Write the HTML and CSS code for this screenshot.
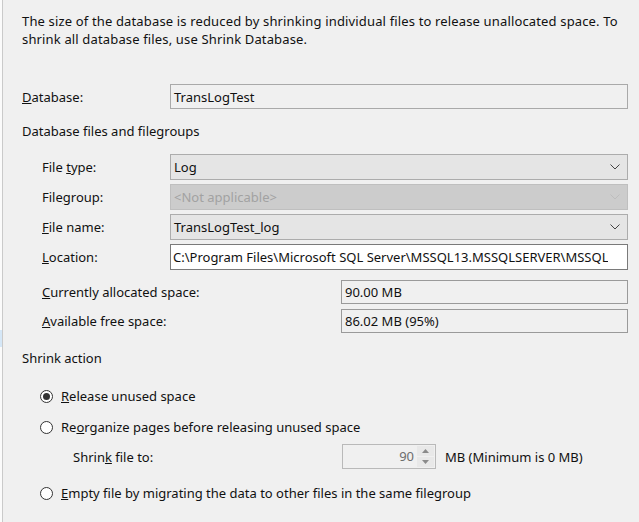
FILE: index.html
```html
<!DOCTYPE html>
<html>
<head>
<meta charset="utf-8">
<link rel="stylesheet" href="styles.css">
</head>
<body>
<div class="page">
  <div class="edge"><div class="edge-hl"></div></div>
  <div class="content">
    <p class="desc">The size of the database is reduced by shrinking individual files to release unallocated space. To<br>shrink all database files, use Shrink Database.</p>

    <div class="row db-row">
      <span class="label"><u>D</u>atabase:</span>
      <div class="field readonly">TransLogTest</div>
    </div>

    <div class="heading files-heading">Database files and filegroups</div>

    <div class="group">
      <div class="row sub-row">
        <span class="label">File <u>t</u>ype:</span>
        <div class="field combo"><span>Log</span><svg class="chev" width="10" height="6" viewBox="0 0 10 6"><path d="M0.5 0.5 L5 5 L9.5 0.5" fill="none" stroke="#444" stroke-width="1"/></svg></div>
      </div>
      <div class="row sub-row">
        <span class="label">File<u>g</u>roup:</span>
        <div class="field combo disabled"><span>&lt;Not applicable&gt;</span><svg class="chev" width="10" height="6" viewBox="0 0 10 6"><path d="M0.5 0.5 L5 5 L9.5 0.5" fill="none" stroke="#bdbdbd" stroke-width="1"/></svg></div>
      </div>
      <div class="row sub-row">
        <span class="label"><u>F</u>ile name:</span>
        <div class="field combo"><span>TransLogTest_log</span><svg class="chev" width="10" height="6" viewBox="0 0 10 6"><path d="M0.5 0.5 L5 5 L9.5 0.5" fill="none" stroke="#444" stroke-width="1"/></svg></div>
      </div>
      <div class="row sub-row">
        <span class="label"><u>L</u>ocation:</span>
        <div class="field text"><span class="clip">C:\Program Files\Microsoft SQL Server\MSSQL13.MSSQLSERVER\MSSQL</span></div>
      </div>
    </div>

    <div class="space-group">
      <div class="row space-row">
        <span class="label"><u>C</u>urrently allocated space:</span>
        <div class="field readonly small">90.00 MB</div>
      </div>
      <div class="row space-row">
        <span class="label"><u>A</u>vailable free space:</span>
        <div class="field readonly small">86.02 MB (95%)</div>
      </div>
    </div>

    <div class="heading shrink-heading">Shrink action</div>

    <div class="radio-row first">
      <span class="radio checked"></span>
      <span><u>R</u>elease unused space</span>
    </div>
    <div class="radio-row second">
      <span class="radio"></span>
      <span>Re<u>o</u>rganize pages before releasing unused space</span>
    </div>
    <div class="shrink-row">
      <span class="shrink-label">Shrin<u>k</u> file to:</span>
      <div class="spinner">
        <span class="spin-val">90</span>
        <div class="spin-btns">
          <span class="spin-btn"><svg width="7" height="4" viewBox="0 0 7 4"><path d="M0 4 L3.5 0 L7 4 Z" fill="#8a8a8a"/></svg></span>
          <span class="spin-btn"><svg width="7" height="4" viewBox="0 0 7 4"><path d="M0 0 L3.5 4 L7 0 Z" fill="#8a8a8a"/></svg></span>
        </div>
      </div>
      <span class="mb">MB (Minimum is 0 MB)</span>
    </div>
    <div class="radio-row third">
      <span class="radio"></span>
      <span><u>E</u>mpty file by migrating the data to other files in the same filegroup</span>
    </div>
  </div>
</div>
</body>
</html>
```

FILE: styles.css
```css
* { box-sizing: border-box; }
html, body {
  margin: 0;
  padding: 0;
  background: #f0f0f0;
}
body {
  font-family: "Segoe UI", "Noto Sans", "Open Sans", sans-serif;
  font-size: 13px;
  color: #111;
  width: 639px;
  height: 522px;
  overflow: hidden;
}
u { text-decoration: underline; text-underline-offset: 1px; }
.page {
  display: flex;
  height: 522px;
}
.edge {
  width: 3px;
  flex: none;
  background: #fbfbfb;
  border-right: 1px solid #cacaca;
  display: flex;
  flex-direction: column;
  padding-top: 330px;
}
.edge-hl {
  width: 2px;
  height: 17px;
  background: #d5e7f7;
}
.content {
  flex: 1;
  padding: 12px 11px 0 19px;
  display: flex;
  flex-direction: column;
}
.desc {
  margin: 0;
  line-height: 18px;
  white-space: nowrap;
  letter-spacing: 0.15px;
}
.row {
  display: grid;
  align-items: center;
}
.db-row {
  grid-template-columns: 148px 1fr;
  margin-top: 36px;
}
.label { white-space: nowrap; }
.field {
  height: 25px;
  border: 1px solid #adadad;
  display: flex;
  align-items: center;
  padding: 0 3px;
  white-space: nowrap;
  overflow: hidden;
}
.readonly {
  background: #f0f0f0;
  border-color: #a9a9a9;
}
.heading {
  line-height: 16px;
}
.files-heading { margin-top: 14px; }
.group {
  display: flex;
  flex-direction: column;
  gap: 4px;
  margin-top: 15px;
  padding-left: 20px;
}
.sub-row {
  grid-template-columns: 128px 1fr;
}
.sub-row .field { height: 26px; }
.combo {
  background: #e5e5e5;
  border-color: #acacac;
  justify-content: space-between;
  padding-right: 7px;
}
.combo.disabled {
  background: #cccccc;
  border-color: #bfbfbf;
  color: #a2a2a2;
}
.chev { flex: none; }
.text {
  background: #fff;
  border-color: #7a7a7a;
  padding-left: 2px;
}
.clip { overflow: hidden; }
.space-group {
  display: flex;
  flex-direction: column;
  gap: 5px;
  margin-top: 10px;
  padding-left: 20px;
}
.space-row {
  grid-template-columns: 299px 1fr;
}
.small {
  height: 24px;
  border-color: #9a9a9a;
}
.shrink-heading { margin-top: 17px; }
.radio-row {
  display: flex;
  align-items: center;
  height: 20px;
  padding-left: 18px;
  gap: 8px;
  white-space: nowrap;
}
.radio-row.first { margin-top: 20px; }
.radio-row.second { margin-top: 11px; }
.radio-row.third { margin-top: 14px; }
.radio {
  width: 13px;
  height: 13px;
  border: 1px solid #333;
  border-radius: 50%;
  background: #fff;
  flex: none;
  display: flex;
  align-items: center;
  justify-content: center;
}
.radio.checked::after {
  content: "";
  width: 7px;
  height: 7px;
  border-radius: 50%;
  background: #333;
}
.shrink-row {
  display: grid;
  grid-template-columns: 269px 94px auto;
  align-items: center;
  margin-top: 7px;
  padding-left: 51px;
}
.mb { margin-left: 9px; white-space: nowrap; }
.spinner {
  height: 25px;
  border: 1px solid #b9b9b9;
  background: #f0f0f0;
  display: flex;
  align-items: stretch;
  padding: 1px;
}
.spin-val {
  flex: 1;
  text-align: right;
  color: #6d6d6d;
  padding-right: 3px;
  line-height: 21px;
}
.spin-btns {
  width: 17px;
  display: flex;
  flex-direction: column;
  gap: 1px;
}
.spin-btn {
  flex: 1;
  background: #e8e8e8;
  display: flex;
  align-items: center;
  justify-content: center;
}
```
